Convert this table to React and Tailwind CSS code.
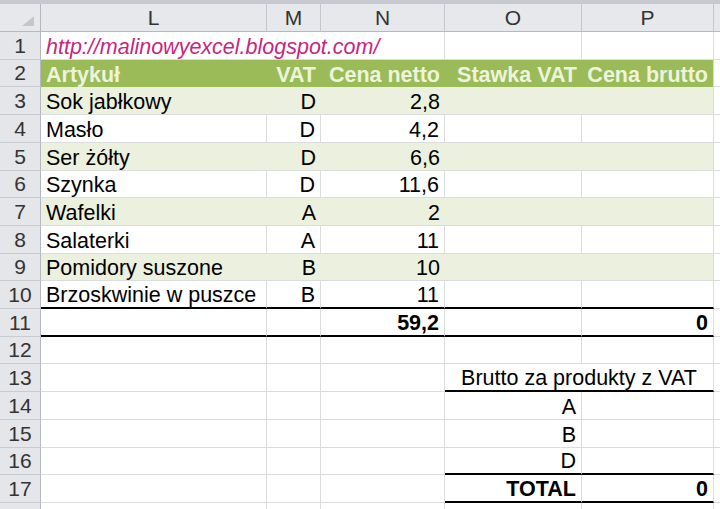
import React from 'react';

const GRID = 'border-[#dadcdd]';

const items = [
  { name: 'Sok jabłkowy', vat: 'D', net: '2,8', h: 'h-[28px]', green: true },
  { name: 'Masło', vat: 'D', net: '4,2', h: 'h-[28px]', green: false },
  { name: 'Ser żółty', vat: 'D', net: '6,6', h: 'h-[28px]', green: true },
  { name: 'Szynka', vat: 'D', net: '11,6', h: 'h-[27px]', green: false },
  { name: 'Wafelki', vat: 'A', net: '2', h: 'h-[28px]', green: true },
  { name: 'Salaterki', vat: 'A', net: '11', h: 'h-[28px]', green: false },
  { name: 'Pomidory suszone', vat: 'B', net: '10', h: 'h-[27px]', green: true },
  { name: 'Brzoskwinie w puszce', vat: 'B', net: '11', h: 'h-[28px]', green: false, last: true },
];

function Cell({ w, align = 'left', bold, italic, r = true, b = 'grid', className = '', children }) {
  const alignCls = align === 'right' ? 'justify-end' : align === 'center' ? 'justify-center' : 'justify-start';
  const rCls = r ? `border-r ${GRID}` : '';
  const bCls = b === 'thick' ? 'border-b-2 border-b-black' : b === 'grid' ? `border-b ${GRID}` : '';
  return (
    <div
      className={`${w} ${rCls} ${bCls} ${alignCls} ${bold ? 'font-bold' : ''} ${italic ? 'italic' : ''} ${className} flex shrink-0 items-end overflow-visible whitespace-nowrap px-[5px] text-[21.5px] leading-[24px]`}
    >
      {children}
    </div>
  );
}

function Row({ n, h, children }) {
  return (
    <div className={`flex ${h}`}>
      <div className="flex w-[41px] shrink-0 items-center justify-center border-r border-b border-r-[#b4b9c0] border-b-[#c8ccd1] bg-[#e4e6ea] text-[21px] text-[#333]">
        {n}
      </div>
      {children}
    </div>
  );
}

export default function App() {
  return (
    <div className="h-[509px] w-[720px] overflow-hidden bg-white font-['Liberation_Sans',Arial,sans-serif] text-black">
      <div className="h-[4px] bg-[#c6cad0]" />

      {/* column headers */}
      <div className="flex h-[28px] border-b border-[#b4b9c0] bg-[#e6e8ec] text-[21px] text-[#333]">
        <div className="relative w-[41px] shrink-0 border-r border-[#b4b9c0]">
          <svg className="absolute right-[6px] bottom-[5px]" width="12" height="10" viewBox="0 0 12 10">
            <polygon points="12,0 12,10 0,10" fill="#c3c7cc" />
          </svg>
        </div>
        {[
          ['L', 'w-[226px]'],
          ['M', 'w-[54px]'],
          ['N', 'w-[124px]'],
          ['O', 'w-[137px]'],
          ['P', 'w-[132px]'],
        ].map(([l, w]) => (
          <div key={l} className={`${w} flex shrink-0 items-center justify-center border-r border-[#c4c8ce]`}>
            {l}
          </div>
        ))}
        <div className="flex-1" />
      </div>

      {/* 1 */}
      <Row n={1} h="h-[28px]">
        <Cell w="w-[404px]" italic className="text-[#c8267e]">http://malinowyexcel.blogspot.com/</Cell>
        <Cell w="w-[137px]" />
        <Cell w="w-[132px]" />
        <Cell w="flex-1" r={false} />
      </Row>

      {/* 2 */}
      <Row n={2} h="h-[27px]">
        <div className="flex shrink-0 bg-[#9bbb59] font-bold text-[#eef4dc]">
          <Cell w="w-[226px]" r={false} b="none">Artykuł</Cell>
          <Cell w="w-[54px]" r={false} b="none" align="right">VAT</Cell>
          <Cell w="w-[124px]" r={false} b="none" align="right">Cena netto</Cell>
          <Cell w="w-[137px]" r={false} b="none" align="right">Stawka VAT</Cell>
          <Cell w="w-[132px]" b="none" align="right">Cena brutto</Cell>
        </div>
        <Cell w="flex-1" r={false} />
      </Row>

      {/* 3-10 */}
      {items.map((it, i) => (
        <Row key={it.name} n={i + 3} h={it.h}>
          <div className={`flex shrink-0 ${it.green ? 'bg-[#ebf1de]' : ''}`}>
            <Cell w="w-[226px]" r={!it.green} b={it.last ? 'thick' : 'grid'}>{it.name}</Cell>
            <Cell w="w-[54px]" r={!it.green} b={it.last ? 'thick' : 'grid'} align="right">{it.vat}</Cell>
            <Cell w="w-[124px]" r={!it.green} b={it.last ? 'thick' : 'grid'} align="right">{it.net}</Cell>
            <Cell w="w-[137px]" r={!it.green} b={it.last ? 'thick' : 'grid'} />
            <Cell w="w-[132px]" b={it.last ? 'thick' : 'grid'} />
          </div>
          <Cell w="flex-1" r={false} />
        </Row>
      ))}

      {/* 11 */}
      <Row n={11} h="h-[28px]">
        <Cell w="w-[226px]" b="thick" />
        <Cell w="w-[54px]" b="thick" />
        <Cell w="w-[124px]" b="thick" align="right" bold>59,2</Cell>
        <Cell w="w-[137px]" b="thick" />
        <Cell w="w-[132px]" b="thick" align="right" bold>0</Cell>
        <Cell w="flex-1" r={false} />
      </Row>

      {/* 12 */}
      <Row n={12} h="h-[27px]">
        <Cell w="w-[226px]" />
        <Cell w="w-[54px]" />
        <Cell w="w-[124px]" />
        <Cell w="w-[137px]" />
        <Cell w="w-[132px]" />
        <Cell w="flex-1" r={false} />
      </Row>

      {/* 13 */}
      <Row n={13} h="h-[28px]">
        <Cell w="w-[226px]" />
        <Cell w="w-[54px]" />
        <Cell w="w-[124px]" />
        <Cell w="w-[269px]" b="thick" align="center">Brutto za produkty z VAT</Cell>
        <Cell w="flex-1" r={false} />
      </Row>

      {/* 14-16 */}
      {[
        ['A', 14, 'h-[28px]', 'grid'],
        ['B', 15, 'h-[28px]', 'grid'],
        ['D', 16, 'h-[27px]', 'thick'],
      ].map(([v, n, h, b]) => (
        <Row key={n} n={n} h={h}>
          <Cell w="w-[226px]" />
          <Cell w="w-[54px]" />
          <Cell w="w-[124px]" />
          <Cell w="w-[137px]" b={b} align="right">{v}</Cell>
          <Cell w="w-[132px]" b={b} />
          <Cell w="flex-1" r={false} />
        </Row>
      ))}

      {/* 17 */}
      <Row n={17} h="h-[28px]">
        <Cell w="w-[226px]" />
        <Cell w="w-[54px]" />
        <Cell w="w-[124px]" />
        <Cell w="w-[137px]" b="thick" align="right" bold>TOTAL</Cell>
        <Cell w="w-[132px]" b="thick" align="right" bold>0</Cell>
        <Cell w="flex-1" r={false} />
      </Row>

      {/* 18 (cut off) */}
      <Row n="" h="h-[28px]">
        <Cell w="w-[226px]" />
        <Cell w="w-[54px]" />
        <Cell w="w-[124px]" />
        <Cell w="w-[137px]" />
        <Cell w="w-[132px]" />
        <Cell w="flex-1" r={false} />
      </Row>
    </div>
  );
}
